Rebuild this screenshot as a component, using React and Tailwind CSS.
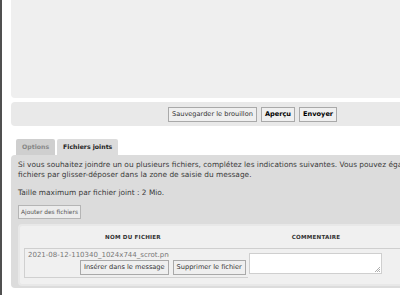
import React from 'react';

const font = { fontFamily: '"DejaVu Sans", Verdana, sans-serif' };

function Btn({ children, bold }) {
  return (
    <button
      className={`h-[15px] px-[3px] border border-[#a9a9a9] bg-[#efefef] text-[6.6px] leading-[13px] text-[#333] whitespace-nowrap ${bold ? 'font-bold text-black' : ''}`}
    >
      {children}
    </button>
  );
}

export default function App() {
  return (
    <div className="w-[400px] h-[295px] overflow-hidden bg-white flex" style={font}>
      <div className="w-[2px] shrink-0 bg-[#505050]" />
      <div className="flex-1 pl-[9px] flex flex-col">
        <div className="h-[98px] w-[400px] bg-[#efefef] rounded-b-[4px] shrink-0" />

        <div className="mt-[4px] h-[24px] w-[400px] bg-[#e9e9e9] rounded-[4px] flex items-center pl-[157px] gap-[4px] shrink-0">
          <Btn>Sauvegarder le brouillon</Btn>
          <Btn bold>Aperçu</Btn>
          <Btn bold>Envoyer</Btn>
        </div>

        <div className="mt-[13px] flex gap-[2px] pl-[5px] h-[16px] text-[6.2px] font-bold shrink-0">
          <div className="px-[6px] flex items-center bg-[#cfcfcf] text-[#888] rounded-t-[2px]">Options</div>
          <div className="px-[6px] flex items-center bg-[#dcdcdc] text-[#222] rounded-t-[2px]">Fichiers joints</div>
        </div>

        <div className="w-[400px] h-[133px] shrink-0 bg-[#dcdcdc] rounded-[4px] pt-[5px] pl-[7px] text-[7.4px] text-[#3a3a3a] overflow-hidden">
          <p className="leading-[10px] whitespace-nowrap">
            Si vous souhaitez joindre un ou plusieurs fichiers, complétez les indications suivantes. Vous pouvez également
          </p>
          <p className="leading-[10px] whitespace-nowrap">fichiers par glisser-déposer dans la zone de saisie du message.</p>
          <p className="leading-[10px] mt-[8px]">Taille maximum par fichier joint : 2 Mio.</p>
          <div className="mt-[7px]">
            <button className="h-[14px] px-[2px] border border-[#b5b5b5] bg-[#ececec] text-[5.9px] text-[#555] leading-[12px]">
              Ajouter des fichiers
            </button>
          </div>
          <div className="mt-[5px] w-[400px] h-[62px] bg-[#f0f0f0] border-[2px] border-[#e8e8e8] rounded-[4px] pl-[4px] pt-[7px]">
            <div className="flex text-[5.6px] font-bold text-[#333] tracking-[0.2px] h-[15px]">
              <div className="w-[218px] text-center">NOM DU FICHIER</div>
              <div className="w-[148px] text-center">COMMENTAIRE</div>
            </div>
            <div className="border-t border-[#cfcfcf] flex h-[30px]">
              <div className="w-[224px] border-l border-b border-[#d0d0d0] pl-[3px] pt-[2px] flex flex-col">
                <div className="text-[7px] text-[#777] leading-[9px] whitespace-nowrap w-[141px] overflow-hidden">
                  2021-08-12-110340_1024x744_scrot.png
                </div>
                <div className="flex gap-[4px] pl-[52px]">
                  <Btn>Insérer dans le message</Btn>
                  <Btn>Supprimer le fichier</Btn>
                </div>
              </div>
              <div className="pl-[1px] pt-[4px]">
                <div className="relative w-[133px] h-[21px] bg-white border border-[#cfcfcf]">
                  <svg className="absolute right-[1px] bottom-[1px]" width="5" height="5" viewBox="0 0 5 5">
                    <path d="M5 0L0 5M5 2L2 5M5 4L4 5" stroke="#999" strokeWidth="0.8" />
                  </svg>
                </div>
              </div>
            </div>
          </div>
        </div>
      </div>
    </div>
  );
}
